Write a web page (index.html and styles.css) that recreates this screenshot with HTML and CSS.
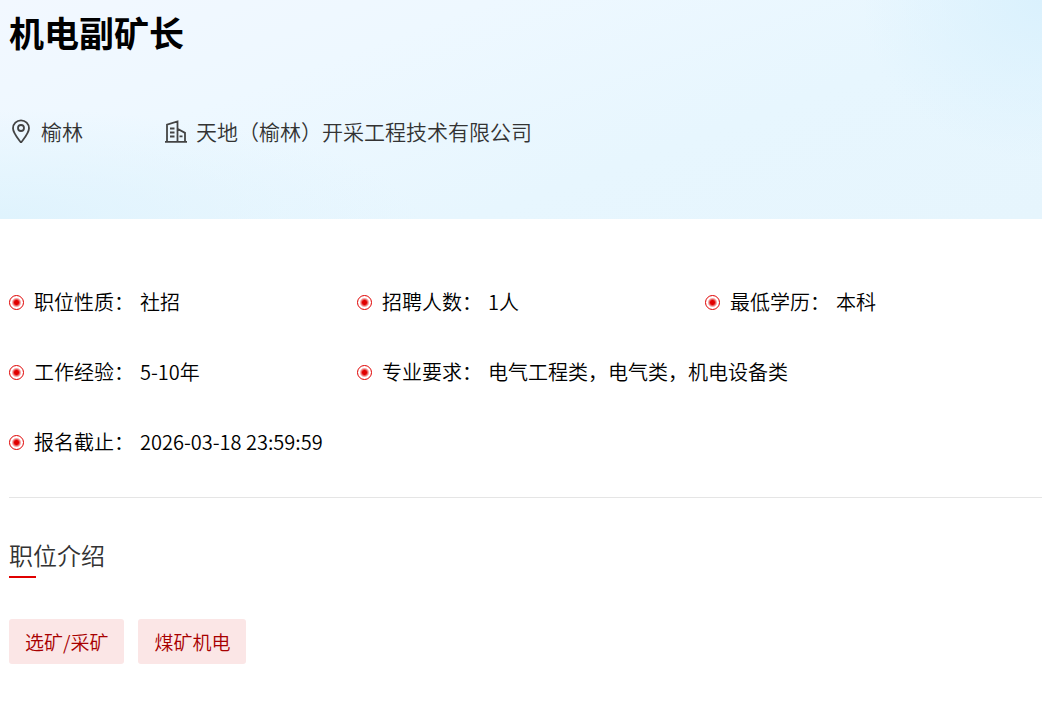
FILE: index.html
```html
<!DOCTYPE html>
<html lang="zh-CN">
<head>
  <meta charset="UTF-8" />
  <meta name="viewport" content="width=device-width, initial-scale=1.0" />
  <title>机电副矿长</title>
  <link rel="stylesheet" href="styles.css">
</head>
<body>
  <header class="banner">
    <h1 class="job-title">机电副矿长</h1>
    <div class="job-meta">
      <span class="meta-item">
        <svg class="meta-icon" viewBox="0 0 24 24" aria-hidden="true">
          <path d="M12 23.6C8.6 19 4 14 4 9.3a8 8 0 0 1 16 0c0 4.7-4.6 9.7-8 14.3z" />
          <circle cx="12" cy="9" r="3" />
        </svg>
        榆林
      </span>
      <span class="meta-item">
        <svg class="meta-icon" viewBox="0 0 24 24" aria-hidden="true">
          <path d="M1 22.8h22M3 22.5V5.7L13.5 2.5v20M13.5 9.7l7.5 4.2v8.6M6 9.5h4.5M6 13.5h4.5M6 17.5h4.5M15.5 17.3h3" />
        </svg>
        天地（榆林）开采工程技术有限公司
      </span>
    </div>
  </header>

  <main class="content">
    <dl class="info">
      <div class="info-item"><dt>职位性质：</dt><dd>社招</dd></div>
      <div class="info-item"><dt>招聘人数：</dt><dd>1人</dd></div>
      <div class="info-item"><dt>最低学历：</dt><dd>本科</dd></div>
      <div class="info-item"><dt>工作经验：</dt><dd>5-10年</dd></div>
      <div class="info-item wide"><dt>专业要求：</dt><dd>电气工程类，电气类，机电设备类</dd></div>
      <div class="info-item"><dt>报名截止：</dt><dd>2026-03-18 23:59:59</dd></div>
    </dl>

    <section class="intro">
      <h2 class="intro-title">职位介绍</h2>
      <div class="tags">
        <span class="tag">选矿/采矿</span>
        <span class="tag">煤矿机电</span>
      </div>
    </section>
  </main>
</body>
</html>
```

FILE: styles.css
```css
*,
*::before,
*::after {
  box-sizing: border-box;
}

body {
  margin: 0;
  background: #fff;
  color: #000;
  font-family: "Noto Sans CJK SC", sans-serif;
  font-size: 20px;
  font-weight: 350;
}

h1, h2, dl, dd {
  margin: 0;
}

/* banner */
.banner {
  padding: 7px 9px 72px;
  background:
    radial-gradient(ellipse 180px 160px at 100% 0, #daf1fd, rgba(218, 241, 253, 0)),
    radial-gradient(ellipse 420px 110px at 0 100%, #dff3fd, rgba(223, 243, 253, 0)),
    linear-gradient(160deg, #f2f8ff 0%, #eef8ff 30%, #e7f6fe 65%, #e6f5fd 100%);
}

.job-title {
  font-size: 35px;
  line-height: 50px;
  font-weight: 700;
}

.job-meta {
  display: flex;
  gap: 81px;
  margin-top: 58px;
  color: #333;
  font-size: 21px;
  line-height: 32px;
}

.meta-item {
  display: flex;
  align-items: center;
  gap: 8px;
}

.meta-icon {
  width: 24px;
  height: 24px;
  fill: none;
  stroke: #444;
  stroke-width: 1.8;
}

/* job details */
.content {
  padding-left: 9px;
}

.info {
  display: grid;
  grid-template-columns: 348px 348px 1fr;
  row-gap: 40px;
  padding: 68px 0 40px;
  border-bottom: 1px solid #e5e5e5;
  line-height: 30px;
}

.info-item {
  display: flex;
  align-items: center;
}

.info-item.wide {
  grid-column: span 2;
}

.info-item::before {
  content: "";
  width: 15px;
  height: 15px;
  margin-right: 10px;
  border: 1px solid #e00000;
  border-radius: 50%;
  background: radial-gradient(circle, #e00000 2px, rgba(224, 0, 0, 0) 5px);
}

.info-item dd {
  margin-left: 6px;
}

/* introduction */
.intro-title {
  padding-top: 39px;
  color: #333;
  font-size: 24px;
  line-height: 36px;
  font-weight: 350;
}

.intro-title::after {
  content: "";
  display: block;
  width: 27px;
  height: 2px;
  margin-top: 3px;
  background: #e00000;
}

.tags {
  display: flex;
  gap: 14px;
  margin-top: 41px;
}

.tag {
  padding: 0 16px;
  border-radius: 3px;
  background: #fbe6e6;
  color: #a80000;
  font-size: 19px;
  line-height: 45px;
}
```
